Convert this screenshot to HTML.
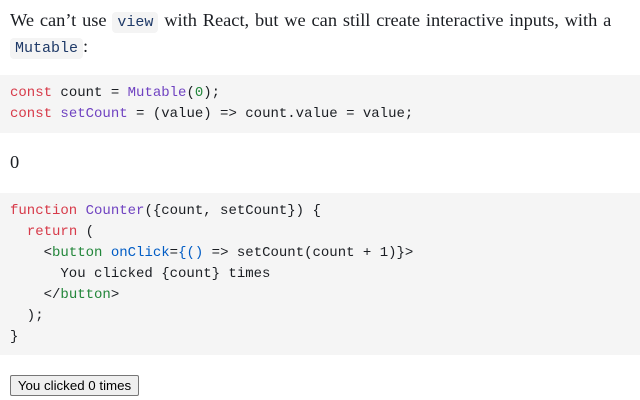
<!DOCTYPE html>
<html><head><style>
body{margin:0;background:#fff;width:640px;height:400px;overflow:hidden;font-family:"Liberation Serif",serif;color:#1b1e23}
p{margin:0;position:absolute;left:10px;font-size:18.4px;line-height:26px}
code.i{font-family:"Liberation Mono",monospace;font-size:15px;background:#f4f4f4;color:#1f3a68;padding:2px 5px;border-radius:4px;word-spacing:0;line-height:1}
pre{position:absolute;left:0;width:640px;margin:0;background:#f5f5f5;font-family:"Liberation Mono",monospace;font-size:14px;line-height:21px;padding:0 10px;box-sizing:border-box;color:#1b1e23}
.k{color:#d73a49}.f{color:#6f42c1}.n{color:#22863a}.a{color:#005cc5}
button{position:absolute;left:10px;top:375px;width:129px;height:21px;font-family:"Liberation Sans",sans-serif;font-size:13.3px;background:#efefef;border:1px solid #767676;border-radius:2px;padding:0;color:#000}
</style></head><body>
<p style="top:7px;width:640px;word-spacing:1.2px">We can’t use <code class="i">view</code> with React, but we can still create interactive inputs, with a<br><code class="i">Mutable</code>:</p>
<pre style="top:75px;height:58px;padding-top:8px"><span class="k">const</span> count = <span class="f">Mutable</span>(<span class="n">0</span>);
<span class="k">const</span> <span class="f">setCount</span> = (value) =&gt; count.value = value;</pre>
<p style="top:149px">0</p>
<pre style="top:193px;height:162px;padding-top:8px"><span class="k">function</span> <span class="f">Counter</span>({count, setCount}) {
  <span class="k">return</span> (
    &lt;<span class="n">button</span> <span class="a">onClick</span>=<span class="a">{()</span> =&gt; setCount(count + 1)}&gt;
      You clicked {count} times
    &lt;/<span class="n">button</span>&gt;
  );
}</pre>
<button>You clicked 0 times</button>
</body></html>
